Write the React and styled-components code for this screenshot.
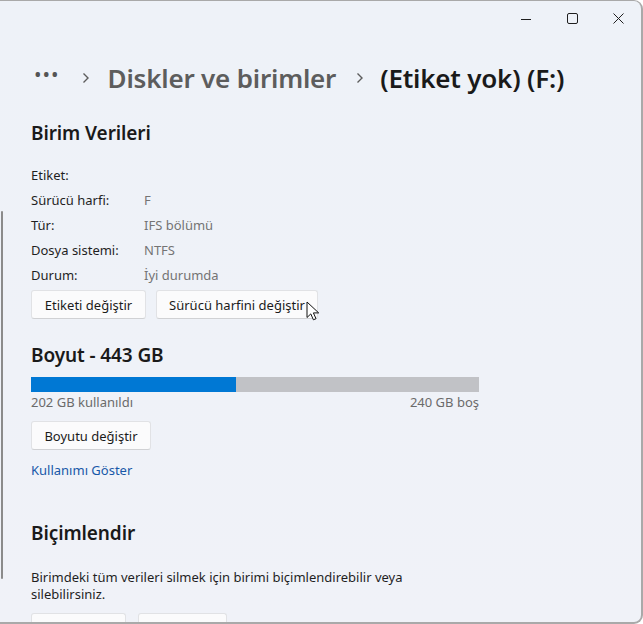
import React from "react";
import styled, { createGlobalStyle } from "styled-components";

const GlobalStyle = createGlobalStyle`
	html, body {
		margin: 0;
		padding: 0;
		background: #ffffff;
	}
	body {
		font-family: "Noto Sans", "Open Sans", sans-serif;
		color: #1b1b1b;
	}
`;

const Window = styled.div`
	position: relative;
	width: 643px;
	height: 624px;
	box-sizing: border-box;
	background: linear-gradient(180deg, #eef2f8 0%, #eff2f8 60%, #f0f2f8 100%);
	border-top: 1px solid #a9a9a9;
	border-right: 2px solid #a9a9a9;
	border-bottom: 2px solid #a9a9a9;
	border-top-right-radius: 9px;
	border-bottom-right-radius: 9px;
	overflow: hidden;
`;

const ScrollThumb = styled.div`
	position: absolute;
	left: 1px;
	top: 210px;
	width: 2px;
	height: 368px;
	background: #8b8b8b;
	border-radius: 1px;
`;

const TitleBar = styled.div`
	display: flex;
	justify-content: flex-end;
	height: 35px;
`;

const CaptionButton = styled.div`
	width: 46px;
	height: 35px;
	display: flex;
	align-items: center;
	justify-content: center;
	color: #1f1f1f;
`;

const Breadcrumb = styled.div`
	display: flex;
	align-items: center;
	height: 56px;
	margin-top: 14px;
	padding-left: 34px;
	font-size: 26px;
	line-height: 1;
`;

const Dots = styled.span`
	color: #555;
	font-size: 20px;
	letter-spacing: 1px;
	margin-right: 22px;
	position: relative;
	top: -3px;
`;

const Chevron = styled.span`
	display: flex;
	align-items: center;
	margin-right: ${(p) => p.$gap || "16px"};
	color: #5c5c5c;
`;

const Crumb = styled.span`
	color: ${(p) => (p.$current ? "#1a1a1a" : "#5d5d5d")};
	font-weight: 600;
	margin-right: ${(p) => (p.$current ? "0" : "20px")};
	letter-spacing: -0.2px;
`;

const Content = styled.div`
	padding: 0 0 0 31px;
`;

const SectionTitle = styled.h2`
	margin: ${(p) => p.$top || "0"} 0 0 0;
	font-size: 19px;
	font-weight: 600;
	line-height: 26px;
	color: #1a1a1a;
	letter-spacing: -0.1px;
`;

const InfoList = styled.div`
	margin-top: 16px;
	display: flex;
	flex-direction: column;
`;

const InfoRow = styled.div`
	display: grid;
	grid-template-columns: 113px 1fr;
	height: 25px;
	align-items: center;
	font-size: 13px;
`;

const InfoLabel = styled.span`
	color: #1f1f1f;
`;

const InfoValue = styled.span`
	color: #747474;
`;

const ButtonRow = styled.div`
	display: flex;
	gap: ${(p) => p.$gap || "10px"};
	margin-top: ${(p) => p.$top || "0"};
`;

const Button = styled.button`
	font-family: inherit;
	font-size: 13px;
	color: #1b1b1b;
	background: #fbfbfc;
	border: 1px solid #e1e2e5;
	border-bottom-color: #d0d1d4;
	border-radius: 3px;
	height: 29px;
	width: ${(p) => p.$width};
	padding: 0;
	box-sizing: border-box;
`;

const ButtonWrap = styled.div`
	position: relative;
`;

const Cursor = styled.svg`
	position: absolute;
	left: 150px;
	top: 11px;
`;

const UsageBar = styled.div`
	display: flex;
	width: 448px;
	height: 15px;
	margin-top: 9px;
	background: #c1c2c6;
`;

const UsageFill = styled.div`
	height: 100%;
	background: #0078d4;
`;

const UsageLegend = styled.div`
	display: flex;
	justify-content: space-between;
	width: 448px;
	margin-top: 0;
	font-size: 13px;
	color: #6b6b6b;
	line-height: 20px;
`;

const Link = styled.a`
	display: inline-block;
	margin-top: 11px;
	font-size: 13px;
	color: #1858a8;
	text-decoration: none;
`;

const Paragraph = styled.p`
	margin: 23px 0 0 0;
	width: 400px;
	font-size: 13px;
	line-height: 17px;
	color: #1f1f1f;
`;

const used = 202;
const total = 443;

export default function App() {
	return (
		<>
			<GlobalStyle />
			<Window>
				<ScrollThumb />
				<TitleBar>
					<CaptionButton>
						<svg width="10" height="10" viewBox="0 0 10 10">
							<path d="M0 5.5h10" stroke="#1f1f1f" strokeWidth="1" />
						</svg>
					</CaptionButton>
					<CaptionButton>
						<svg width="11" height="11" viewBox="0 0 11 11">
							<rect x="0.5" y="0.5" width="10" height="10" rx="1.5" fill="none" stroke="#1f1f1f" strokeWidth="1" />
						</svg>
					</CaptionButton>
					<CaptionButton>
						<svg width="11" height="11" viewBox="0 0 11 11">
							<path d="M0.5 0.5l10 10M10.5 0.5l-10 10" stroke="#1f1f1f" strokeWidth="1" />
						</svg>
					</CaptionButton>
				</TitleBar>

				<Breadcrumb>
					<Dots>•••</Dots>
					<Chevron $gap="18px">
						<svg width="8" height="12" viewBox="0 0 8 12">
							<path d="M1.5 1.5l4.5 4.5-4.5 4.5" fill="none" stroke="#5c5c5c" strokeWidth="1.4" />
						</svg>
					</Chevron>
					<Crumb>Diskler ve birimler</Crumb>
					<Chevron $gap="16px">
						<svg width="8" height="12" viewBox="0 0 8 12">
							<path d="M1.5 1.5l4.5 4.5-4.5 4.5" fill="none" stroke="#5c5c5c" strokeWidth="1.4" />
						</svg>
					</Chevron>
					<Crumb $current>(Etiket yok) (F:)</Crumb>
				</Breadcrumb>

				<Content>
					<SectionTitle $top="14px">Birim Verileri</SectionTitle>
					<InfoList>
						<InfoRow>
							<InfoLabel>Etiket:</InfoLabel>
							<InfoValue></InfoValue>
						</InfoRow>
						<InfoRow>
							<InfoLabel>Sürücü harfi:</InfoLabel>
							<InfoValue>F</InfoValue>
						</InfoRow>
						<InfoRow>
							<InfoLabel>Tür:</InfoLabel>
							<InfoValue>IFS bölümü</InfoValue>
						</InfoRow>
						<InfoRow>
							<InfoLabel>Dosya sistemi:</InfoLabel>
							<InfoValue>NTFS</InfoValue>
						</InfoRow>
						<InfoRow>
							<InfoLabel>Durum:</InfoLabel>
							<InfoValue>İyi durumda</InfoValue>
						</InfoRow>
					</InfoList>
					<ButtonRow $top="3px">
						<Button $width="115px">Etiketi değiştir</Button>
						<ButtonWrap>
							<Button $width="162px">Sürücü harfini değiştir</Button>
							<Cursor width="14" height="20" viewBox="0 0 14 20">
								<path
									d="M1 1v15.5l3.8-3.6 2.6 5.9 2.6-1.1-2.6-5.8h5.3z"
									fill="#ffffff"
									stroke="#111"
									strokeWidth="1"
									strokeLinejoin="round"
								/>
							</Cursor>
						</ButtonWrap>
					</ButtonRow>

					<SectionTitle $top="23px">Boyut - 443 GB</SectionTitle>
					<UsageBar>
						<UsageFill style={{ width: `${(used / total) * 100 + 0.1}%` }} />
					</UsageBar>
					<UsageLegend>
						<span>202 GB kullanıldı</span>
						<span>240 GB boş</span>
					</UsageLegend>
					<ButtonRow $top="9px">
						<Button $width="120px">Boyutu değiştir</Button>
					</ButtonRow>
					<Link href="#">Kullanımı Göster</Link>

					<SectionTitle $top="40px">Biçimlendir</SectionTitle>
					<Paragraph>
						Birimdeki tüm verileri silmek için birimi biçimlendirebilir veya
						silebilirsiniz.
					</Paragraph>
					<ButtonRow $top="10px" $gap="12px">
						<Button $width="95px" aria-label="Biçimlendir" />
						<Button $width="89px" aria-label="Sil" />
					</ButtonRow>
				</Content>
			</Window>
		</>
	);
}
